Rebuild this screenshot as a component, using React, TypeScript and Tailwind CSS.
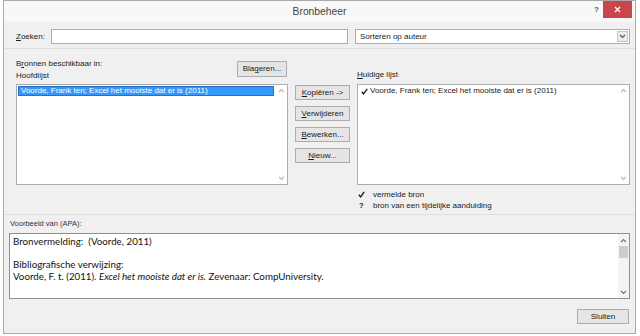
import React from 'react';

const ui = "font-['Liberation_Sans',Arial,sans-serif]";

function Chevron({ up = false, className = '' }: { up?: boolean; className?: string }) {
    return (
        <svg width="7" height="5" viewBox="0 0 7 5" className={className}>
            <path
                d={up ? 'M1 4 L3.5 1.5 L6 4' : 'M1 1 L3.5 3.5 L6 1'}
                fill="none"
                stroke="currentColor"
                strokeWidth="1.1"
            />
        </svg>
    );
}

function Check({ className = '' }: { className?: string }) {
    return (
        <svg width="7" height="7" viewBox="0 0 7 7" className={className}>
            <path d="M0.8 3.8 L2.6 5.8 L6.2 0.8" fill="none" stroke="currentColor" strokeWidth="1.4" />
        </svg>
    );
}

function Btn({ children, className = '' }: { children: React.ReactNode; className?: string }) {
    return (
        <div
            className={`flex items-center justify-center border border-[#adadad] bg-[#e5e5e5] text-[8px] leading-none text-[#1a1a1a] ${className}`}
        >
            {children}
        </div>
    );
}

function ListBox({ children }: { children: React.ReactNode }) {
    return (
        <div className="flex h-[101px] border border-[#abadb3] bg-white">
            <div className="flex-1 p-px">{children}</div>
            <div className="flex w-[12px] flex-col items-center justify-between py-[3px] text-[#b8b8b8]">
                <Chevron up />
                <Chevron />
            </div>
        </div>
    );
}

export default function App() {
    return (
        <div className={`h-[336px] w-[640px] overflow-hidden bg-white ${ui}`}>
            <div className="ml-[3px] flex h-[334px] w-[633px] flex-col border border-[#a9a9a9] bg-[#f0f0f0]">
                {/* Title bar */}
                <div className="relative flex h-[21px] items-center justify-center bg-[#f8f8f8]">
                    <span className="text-[10.3px] text-[#444]">Bronbeheer</span>
                    <span className="absolute right-[36px] top-[3px] text-[8px] font-bold text-[#555]">?</span>
                    <div className="absolute right-[3px] top-0 flex h-[17px] w-[29px] items-center justify-center bg-[#c9464b]">
                        <svg width="7" height="7" viewBox="0 0 7 7">
                            <path d="M1 1 L6 6 M6 1 L1 6" stroke="white" strokeWidth="1.3" />
                        </svg>
                    </div>
                </div>

                <div className="flex flex-1 flex-col px-[5px]">
                    {/* Search row */}
                    <div className="mt-[7px] flex h-[15px] items-center">
                        <div className="w-[42px] pl-[7px] text-[8px] text-[#1a1a1a]">
                            <span className="underline">Z</span>oeken:
                        </div>
                        <div className="h-full w-[297px] border border-[#abadb3] bg-white" />
                        <div className="ml-[7px] flex h-full flex-1 items-center border border-[#abadb3] bg-white">
                            <span className="flex-1 pl-[4px] text-[8px] text-[#1a1a1a]">Sorteren op auteur</span>
                            <div className="mr-px flex h-[11px] w-[11px] items-center justify-center border border-[#c6c6c6] bg-[#ececec] text-[#555]">
                                <Chevron />
                            </div>
                        </div>
                    </div>

                    <div className="-mx-[5px] mt-[4px] h-px bg-[#dedede]" />

                    {/* Lists */}
                    <div className="flex">
                        <div className="ml-[7px] flex w-[272px] flex-col">
                            <div className="flex h-[35px] justify-between">
                                <div className="self-end pb-[2px] text-[8px] leading-[12px] text-[#1a1a1a]">
                                    <div>
                                        B<span className="underline">r</span>onnen beschikbaar in:
                                    </div>
                                    <div>Hoofdlijst</div>
                                </div>
                                <Btn className="mr-px mt-[12px] h-[16px] w-[50px]">
                                    <span>
                                        Bla<span className="underline">g</span>eren...
                                    </span>
                                </Btn>
                            </div>
                            <ListBox>
                                <div className="h-[10px] border border-[#2a6fc4] bg-[#3399ff] pl-[2px] text-[8px] leading-[8px] text-white">
                                    Voorde, Frank ten; Excel het mooiste dat er is (2011)
                                </div>
                            </ListBox>
                        </div>

                        <div className="ml-[7px] flex w-[55px] flex-col gap-[6px] pt-[36px]">
                            <Btn className="h-[15px]">
                                <span>
                                    <span className="underline">K</span>opiëren -&gt;
                                </span>
                            </Btn>
                            <Btn className="h-[15px]">
                                <span>
                                    <span className="underline">V</span>erwijderen
                                </span>
                            </Btn>
                            <Btn className="h-[15px]">
                                <span>
                                    <span className="underline">B</span>ewerken...
                                </span>
                            </Btn>
                            <Btn className="h-[15px]">
                                <span>
                                    <span className="underline">N</span>ieuw...
                                </span>
                            </Btn>
                        </div>

                        <div className="ml-[7px] flex flex-1 flex-col">
                            <div className="flex h-[35px] items-end pb-[3px] text-[8px] leading-[12px] text-[#1a1a1a]">
                                <span>
                                    <span className="underline">H</span>uidige lijst
                                </span>
                            </div>
                            <ListBox>
                                <div className="flex items-center gap-[2px] pl-[2px] text-[8px] leading-[10px] text-[#1a1a1a]">
                                    <Check className="text-[#222]" />
                                    <span>Voorde, Frank ten; Excel het mooiste dat er is (2011)</span>
                                </div>
                            </ListBox>
                            <div className="mt-[4px] flex flex-col pl-px text-[8px] leading-[11px] text-[#1a1a1a]">
                                <div className="flex items-center">
                                    <div className="w-[15px]">
                                        <Check className="text-[#222]" />
                                    </div>
                                    <span>vermelde bron</span>
                                </div>
                                <div className="flex items-center">
                                    <span className="w-[15px] pl-px text-[7.5px] font-bold">?</span>
                                    <span>bron van een tijdelijke aanduiding</span>
                                </div>
                            </div>
                        </div>
                    </div>

                    <div className="-mx-[5px] mt-[3px] h-px bg-[#dedede]" />

                    {/* Preview */}
                    <div className="mt-[3px] pl-px text-[7.5px] leading-[11px] text-[#333]">Voorbeeld van (APA):</div>
                    <div className="mt-[4px] flex h-[66px] border border-[#8f8f8f] bg-white">
                        <div className="flex-1 pl-[3px] pt-[2px] font-['Lato','Liberation_Sans',sans-serif] text-[9.75px] leading-[11.5px] text-[#111]">
                            <div>Bronvermelding:&nbsp; (Voorde, 2011)</div>
                            <div>&nbsp;</div>
                            <div>Bibliografische verwijzing:</div>
                            <div>
                                Voorde, F. t. (2011). <i>Excel het mooiste dat er is.</i> Zevenaar: CompUniversity.
                            </div>
                        </div>
                        <div className="flex w-[11px] flex-col items-center bg-[#f4f4f4] pb-[3px] pt-[4px] text-[#707070]">
                            <Chevron up />
                            <div className="mt-[3px] h-[12px] w-[9px] bg-[#cdcdcd]" />
                            <div className="flex-1" />
                            <Chevron />
                        </div>
                    </div>

                    <div className="mt-[10px] flex justify-end">
                        <Btn className="mr-px h-[15px] w-[52px]">Sluiten</Btn>
                    </div>
                </div>
            </div>
        </div>
    );
}
